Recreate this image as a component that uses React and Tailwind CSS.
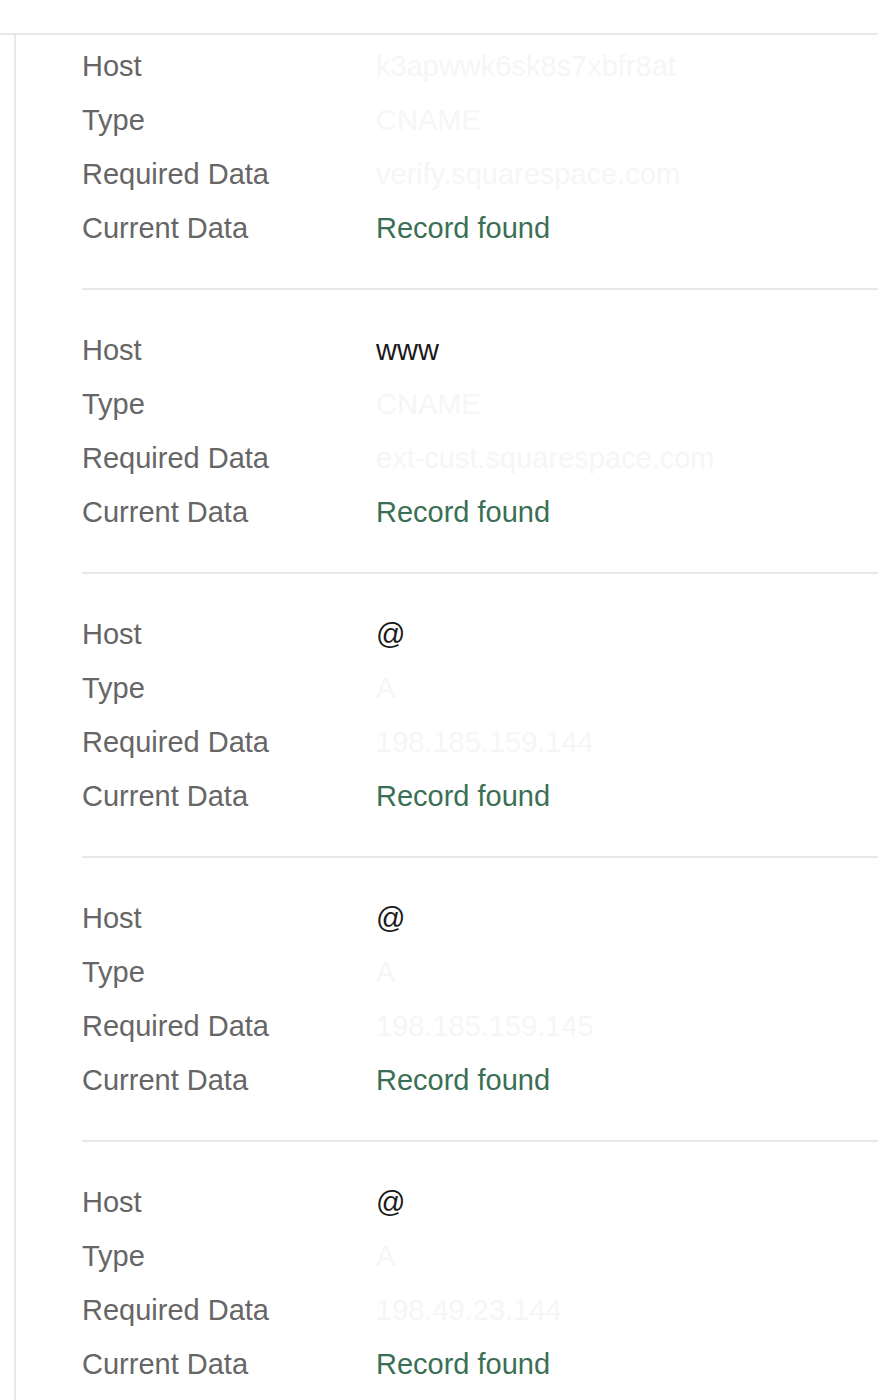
const records = [
  { host: "k3apwwk6sk8s7xbfr8at", hostFaded: true, type: "CNAME", data: "verify.squarespace.com" },
  { host: "www", type: "CNAME", data: "ext-cust.squarespace.com" },
  { host: "@", type: "A", data: "198.185.159.144" },
  { host: "@", type: "A", data: "198.185.159.145" },
  { host: "@", type: "A", data: "198.49.23.144" },
];

function Row({ label, children }) {
  return (
    <div className="flex h-[54px] items-center">
      <div className="w-[294px] shrink-0 text-[#666666]">{label}</div>
      <div>{children}</div>
    </div>
  );
}

function Faded({ children }) {
  return <span className="text-[#f7f5f5]">{children}</span>;
}

function Record({ rec, first }) {
  return (
    <div className={`${first ? "pt-[4px]" : "pt-[33px]"} pb-[33px] border-b-2 border-[#e8e8e8]`}>
      <Row label="Host">
        {rec.hostFaded ? <Faded>{rec.host}</Faded> : <span className="text-[#1a1a1a]">{rec.host}</span>}
      </Row>
      <Row label="Type">
        <Faded>{rec.type}</Faded>
      </Row>
      <Row label="Required Data">
        <Faded>{rec.data}</Faded>
      </Row>
      <Row label="Current Data">
        <span className="text-[#3b6f55]">Record found</span>
      </Row>
    </div>
  );
}

export default function App() {
  return (
    <div className="w-[878px] h-[1400px] overflow-hidden bg-white font-['Liberation_Sans',Arial,sans-serif] text-[29px] leading-none">
      <div className="h-[35px] border-b-2 border-[#e8e8e8]" />
      <div className="flex">
        <div className="w-[14px] shrink-0" />
        <div className="flex-1 border-l-2 border-[#e8e8e8] pl-[66px] min-h-[1400px]">
          {records.map((rec, i) => (
            <Record key={i} rec={rec} first={i === 0} />
          ))}
        </div>
      </div>
    </div>
  );
}
